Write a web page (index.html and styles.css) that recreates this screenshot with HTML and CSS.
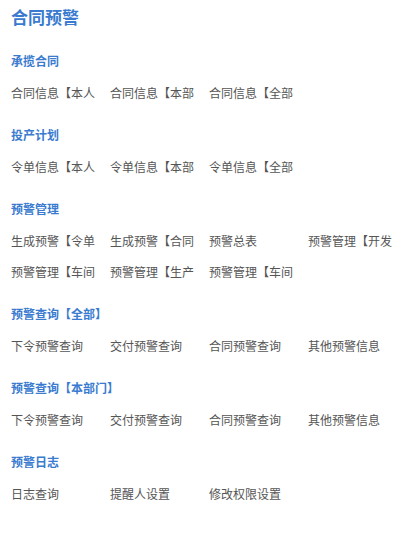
FILE: index.html
```html
<!DOCTYPE html>
<html lang="zh-CN">
<head>
    <meta charset="UTF-8">
    <meta name="viewport" content="width=device-width, initial-scale=1.0">
    <link rel="stylesheet" href="styles.css">
    <title>合同预警</title>
</head>
<body>
    <div class="page">
        <h1 class="page-title">合同预警</h1>

        <div class="section">
            <h3 class="section-title">承揽合同</h3>
            <div class="links">
                <a class="link">合同信息【本人</a>
                <a class="link">合同信息【本部</a>
                <a class="link">合同信息【全部</a>
            </div>
        </div>

        <div class="section">
            <h3 class="section-title">投产计划</h3>
            <div class="links">
                <a class="link">令单信息【本人</a>
                <a class="link">令单信息【本部</a>
                <a class="link">令单信息【全部</a>
            </div>
        </div>

        <div class="section">
            <h3 class="section-title">预警管理</h3>
            <div class="links">
                <a class="link">生成预警【令单</a>
                <a class="link">生成预警【合同</a>
                <a class="link">预警总表</a>
                <a class="link">预警管理【开发</a>
                <a class="link">预警管理【车间</a>
                <a class="link">预警管理【生产</a>
                <a class="link">预警管理【车间</a>
            </div>
        </div>

        <div class="section">
            <h3 class="section-title">预警查询【全部】</h3>
            <div class="links">
                <a class="link">下令预警查询</a>
                <a class="link">交付预警查询</a>
                <a class="link">合同预警查询</a>
                <a class="link">其他预警信息</a>
            </div>
        </div>

        <div class="section">
            <h3 class="section-title">预警查询【本部门】</h3>
            <div class="links">
                <a class="link">下令预警查询</a>
                <a class="link">交付预警查询</a>
                <a class="link">合同预警查询</a>
                <a class="link">其他预警信息</a>
            </div>
        </div>

        <div class="section">
            <h3 class="section-title">预警日志</h3>
            <div class="links">
                <a class="link">日志查询</a>
                <a class="link">提醒人设置</a>
                <a class="link">修改权限设置</a>
            </div>
        </div>
    </div>
</body>
</html>
```

FILE: styles.css
```css
body {
    margin: 0;
    padding: 0;
    background-color: #fff;
    font-family: "Noto Sans CJK SC", "Noto Sans", sans-serif;
}

.page {
    padding: 0 0 0 11px;
}

.page-title {
    margin: 0 0 17px;
    font-size: 17px;
    line-height: 34px;
    font-weight: bold;
    color: #3a7bcf;
}

.section {
    margin-bottom: 22px;
}

.section-title {
    margin: 0 0 12px;
    font-size: 12px;
    line-height: 20px;
    font-weight: bold;
    color: #3a7bcf;
}

.links {
    display: grid;
    grid-template-columns: repeat(3, 99px) 1fr;
    row-gap: 11px;
}

.link {
    display: block;
    white-space: nowrap;
    font-size: 12px;
    line-height: 20px;
    color: #555;
    cursor: pointer;
}

.link:hover {
    color: #3a7bcf;
}
```
